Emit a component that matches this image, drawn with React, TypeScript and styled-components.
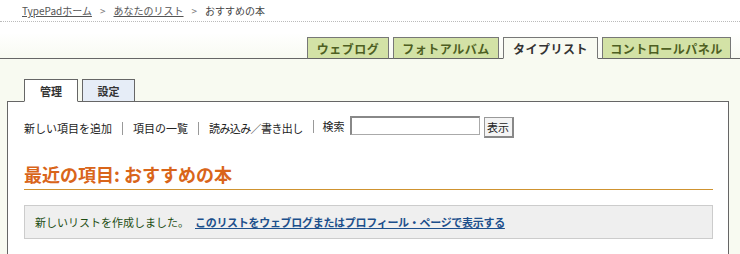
import React from 'react';
import styled, { createGlobalStyle } from 'styled-components';

const GlobalStyle = createGlobalStyle`
  html, body {
    margin: 0;
    padding: 0;
    background: #f8faf1;
  }
  body {
    font-family: "Noto Sans CJK JP", "Liberation Sans", sans-serif;
    overflow: hidden;
  }
`;

const Page = styled.div`
  width: 740px;
  height: 254px;
  overflow: hidden;
  display: flex;
  flex-direction: column;
`;

const Breadcrumb = styled.div`
  height: 22px;
  box-sizing: border-box;
  padding: 4px 0 0 22px;
  background: #fff;
  border-bottom: 1px dotted #bbb;
  font-size: 10px;
  line-height: 14px;
  color: #444;
  display: flex;
  gap: 8px;
`;

const Crumb = styled.a`
  color: #555;
  text-decoration: underline;
`;

const Sep = styled.span`
  color: #777;
`;

const TopNav = styled.div`
  height: 37px;
  box-sizing: border-box;
  background: linear-gradient(#fff 0%, #fff 30%, #f8faf1 100%);
  border-bottom: 1px solid #666;
  display: flex;
  justify-content: flex-end;
  align-items: flex-end;
  gap: 4px;
  padding-right: 9px;
`;

const TopTab = styled.div<{ active?: boolean; w: number }>`
  width: ${p => p.w}px;
  height: 22px;
  box-sizing: border-box;
  margin-bottom: -1px;
  border: 1px solid #777;
  border-bottom: ${p => (p.active ? '1px solid #f8faf1' : '1px solid #666')};
  background: ${p => (p.active ? '#f8faf1' : '#d3e2a6')};
  color: ${p => (p.active ? '#333' : '#4e5f22')};
  font-size: 12px;
  font-weight: bold;
  display: flex;
  align-items: center;
  justify-content: center;
  letter-spacing: 0.5px;
`;

const Main = styled.div`
  flex: 1;
  background: #f8faf1;
  padding: 20px 11px 0 7px;
  display: flex;
  flex-direction: column;
`;

const SubTabs = styled.div`
  display: flex;
  gap: 4px;
  padding-left: 17px;
  position: relative;
  z-index: 1;
`;

const SubTab = styled.div<{ active?: boolean }>`
  width: ${p => (p.active ? 54 : 53)}px;
  height: 23px;
  box-sizing: border-box;
  margin-bottom: -1px;
  border: 1px solid #666;
  border-bottom: ${p => (p.active ? '1px solid #fff' : '1px solid #666')};
  background: ${p => (p.active ? '#fff' : '#e6edf7')};
  color: #333;
  font-size: 11px;
  font-weight: bold;
  display: flex;
  align-items: center;
  justify-content: center;
`;

const Panel = styled.div`
  flex: 1;
  background: #fff;
  border: 1px solid #666;
  border-bottom: none;
  padding: 14px 15px 0 16px;
`;

const Toolbar = styled.div`
  display: flex;
  align-items: center;
  font-size: 11px;
  color: #222;
  height: 24px;
`;

const ToolLink = styled.span<{ tight?: boolean }>`
  padding: 0 10px;
  border-left: 1px solid #999;
  line-height: 13px;
  letter-spacing: ${p => (p.tight ? '-0.6px' : '0')};
  &:first-child {
    padding-left: 0;
    border-left: none;
  }
`;

const SearchLabel = styled.span`
  padding: 0 5px 0 9px;
  border-left: 1px solid #999;
  line-height: 13px;
  align-self: flex-start;
  margin-top: 4px;
`;

const SearchInput = styled.input`
  width: 130px;
  height: 19px;
  box-sizing: border-box;
  border: 1px solid #aaa;
  border-top: 2px solid #888;
  border-left: 2px solid #888;
  margin: 0 4px 0 0;
  padding: 0;
  align-self: flex-start;
`;

const SearchButton = styled.button`
  width: 30px;
  height: 21px;
  box-sizing: border-box;
  border: 1px solid #999;
  border-right: 2px solid #888;
  border-bottom: 2px solid #888;
  background: #f4f4f4;
  font-family: inherit;
  font-size: 11px;
  color: #222;
  padding: 0;
  align-self: flex-start;
  margin-top: 1px;
`;

const Heading = styled.h2`
  margin: 22px 0 0;
  padding-bottom: 3px;
  font-size: 18px;
  line-height: 24px;
  font-weight: bold;
  color: #d9651a;
  border-bottom: 1px solid #cf9330;
`;

const Message = styled.div`
  margin-top: 15px;
  height: 34px;
  box-sizing: border-box;
  background: #efefef;
  border: 1px solid #ccc;
  padding: 0 10px;
  display: flex;
  align-items: center;
  gap: 6px;
  font-size: 11px;
  color: #1d4d12;
`;

const MessageLink = styled.a`
  color: #1c4f8c;
  font-weight: bold;
  text-decoration: underline;
  letter-spacing: -0.3px;
`;

const topTabs = [
  { label: 'ウェブログ', w: 82 },
  { label: 'フォトアルバム', w: 106 },
  { label: 'タイプリスト', w: 95, active: true },
  { label: 'コントロールパネル', w: 129 }
];

export default function App() {
  return (
    <>
      <GlobalStyle />
      <Page>
        <Breadcrumb>
          <Crumb>TypePadホーム</Crumb>
          <Sep>&gt;</Sep>
          <Crumb>あなたのリスト</Crumb>
          <Sep>&gt;</Sep>
          <span>おすすめの本</span>
        </Breadcrumb>
        <TopNav>
          {topTabs.map(t => (
            <TopTab key={t.label} w={t.w} active={t.active}>
              {t.label}
            </TopTab>
          ))}
        </TopNav>
        <Main>
          <SubTabs>
            <SubTab active>管理</SubTab>
            <SubTab>設定</SubTab>
          </SubTabs>
          <Panel>
            <Toolbar>
              <ToolLink>新しい項目を追加</ToolLink>
              <ToolLink>項目の一覧</ToolLink>
              <ToolLink tight>読み込み／書き出し</ToolLink>
              <SearchLabel>検索</SearchLabel>
              <SearchInput />
              <SearchButton>表示</SearchButton>
            </Toolbar>
            <Heading>最近の項目: おすすめの本</Heading>
            <Message>
              <span>新しいリストを作成しました。</span>
              <MessageLink>このリストをウェブログまたはプロフィール・ページで表示する</MessageLink>
            </Message>
          </Panel>
        </Main>
      </Page>
    </>
  );
}
